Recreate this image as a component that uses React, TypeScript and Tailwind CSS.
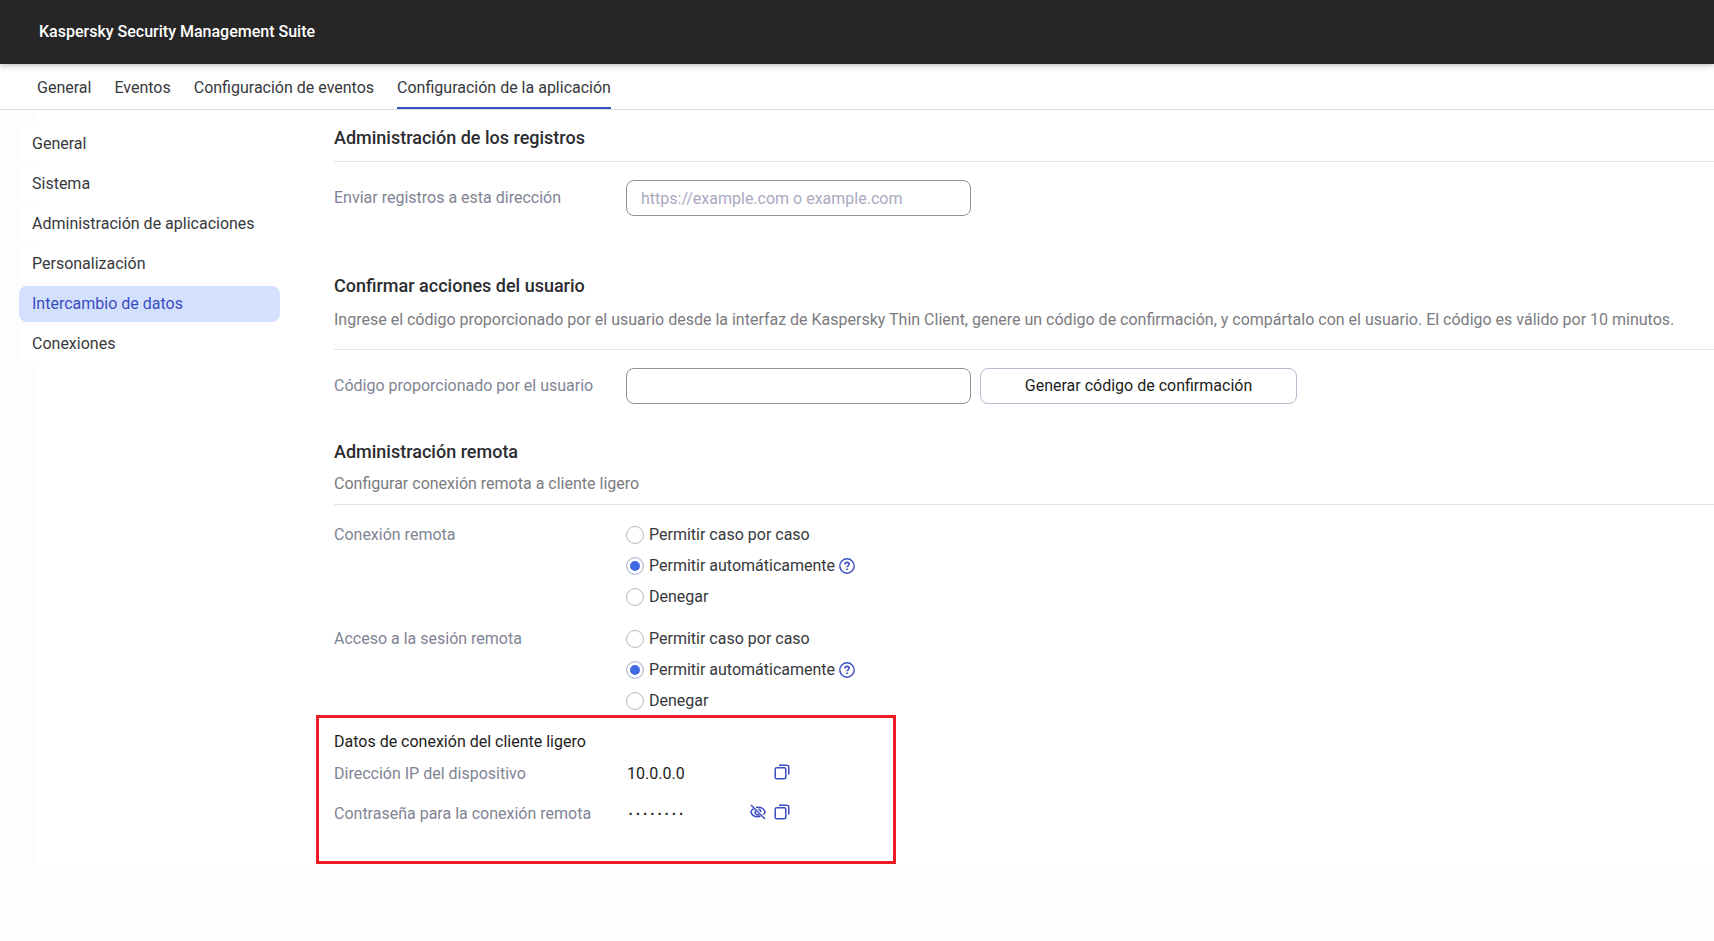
import { useState } from "react";

const TABS = ["General", "Eventos", "Configuración de eventos", "Configuración de la aplicación"];
const SECTIONS = [
  "General",
  "Sistema",
  "Administración de aplicaciones",
  "Personalización",
  "Intercambio de datos",
  "Conexiones",
];
const OPTIONS = ["Permitir caso por caso", "Permitir automáticamente", "Denegar"];

/* Inline icons */
const Help = () => (
  <svg width="16" height="16" viewBox="0 0 16 16" fill="none" stroke="currentColor" strokeWidth="1.4">
    <circle cx="8" cy="8" r="7.2" />
    <path d="M5.9 6.5c0-1.3.9-2.1 2.1-2.1s2.1.8 2.1 1.9c0 1.5-2 1.5-2 3" strokeWidth="1.6" />
    <path d="M7.2 10.4h1.7V12H7.2z" fill="currentColor" stroke="none" />
  </svg>
);
const Copy = () => (
  <svg width="16" height="16" viewBox="0 0 16 16" fill="none" stroke="currentColor" strokeWidth="1.5">
    <rect x="1.2" y="3.8" width="10.6" height="11" rx="1.6" />
    <path d="M5 1.2h7.6a2.2 2.2 0 0 1 2.2 2.2v7.2" />
  </svg>
);
const EyeOff = () => (
  <svg width="16" height="16" viewBox="0 0 16 16" fill="none" stroke="currentColor" strokeWidth="1.5">
    <path d="M1 1l14 14" />
    <path d="M3.6 4.6C2.2 5.5 1.2 6.8.9 8c.8 2.6 3.6 4.7 7.1 4.7.9 0 1.7-.1 2.5-.4" />
    <path d="M6 3.5c.6-.2 1.3-.2 2-.2 3.5 0 6.3 2.1 7.1 4.7-.3 1-.9 1.9-1.8 2.7" />
    <path d="M5.6 6.6a2.8 2.8 0 0 0 3.8 3.9M8.3 5.3a2.7 2.7 0 0 1 2.5 2.7" />
  </svg>
);

/** Group of radio buttons with its caption on the left */
function RadioRow({ name, label }: { name: string; label: string }) {
  const [value, setValue] = useState(OPTIONS[1]);
  return (
    <div role="radiogroup" aria-label={label} className="flex items-start">
      <span className="w-[292px] shrink-0 leading-6 text-[#7f8494]">{label}</span>
      <div className="flex flex-col gap-[7px]">
        {OPTIONS.map((o) => (
          <div key={o} className="flex items-center gap-1">
            <label className="flex items-center gap-[5px] leading-6">
              <input
                type="radio"
                name={name}
                checked={value === o}
                onChange={() => setValue(o)}
                className="size-[18px] appearance-none rounded-full border border-[#b5b8c6] bg-white bg-clip-padding checked:bg-[#4069e5] checked:shadow-[inset_0_0_0_3px_#fff]"
              />
              <span>{o}</span>
            </label>
            {o === OPTIONS[1] && (
              <button className="text-[#3b4cc0]" aria-label="Ayuda">
                <Help />
              </button>
            )}
          </div>
        ))}
      </div>
    </div>
  );
}

export default function App() {
  const [tab, setTab] = useState(TABS[3]);
  const [section, setSection] = useState(SECTIONS[4]);

  return (
    <div className="min-h-screen bg-[#fdfdfd] font-['Roboto',sans-serif] text-base text-[#37383c]">
      <header className="relative flex h-16 items-center bg-[#262626] px-[39px] shadow-[0_1px_6px_rgba(0,0,0,0.3)]">
        <h1 className="font-medium text-white">Kaspersky Security Management Suite</h1>
      </header>

      <nav className="flex h-[46px] gap-[23px] border-b border-[#dcdce0] bg-white px-[37px]">
        {TABS.map((t) => (
          <button
            key={t}
            onClick={() => setTab(t)}
            className={`border-b-2 pt-1 ${tab === t ? "border-[#3b4cc0]" : "border-transparent"}`}
          >
            {t}
          </button>
        ))}
      </nav>

      <div className="ml-[37px] flex bg-white">
        <aside className="-ml-[18px] flex w-[261px] shrink-0 flex-col gap-1 pt-4">
          {SECTIONS.map((s) => (
            <button
              key={s}
              onClick={() => setSection(s)}
              className={`h-9 rounded-lg px-[13px] text-left ${
                section === s ? "bg-[#d3e1ff] text-[#3b4cc0]" : "bg-white"
              }`}
            >
              {s}
            </button>
          ))}
        </aside>

        <main className="ml-[54px] min-w-0 flex-1 pt-4">
          {/* Registros */}
          <section>
            <h2 className="border-b border-[#e3e3e8] pb-[11px] text-lg leading-6 font-medium text-[#2b2c30]">
              Administración de los registros
            </h2>
            <div className="mt-[18px] flex items-center">
              <label htmlFor="log-url" className="w-[292px] shrink-0 text-[#7f8494]">
                Enviar registros a esta dirección
              </label>
              <input
                id="log-url"
                placeholder="https://example.com o example.com"
                className="h-9 w-[345px] rounded-lg border border-[#909096] bg-white px-3.5 outline-none placeholder:text-[#a9a9c0]"
              />
            </div>
          </section>

          {/* Confirmación */}
          <section className="mt-[58px]">
            <h2 className="text-lg leading-6 font-medium text-[#2b2c30]">Confirmar acciones del usuario</h2>
            <p className="mt-2.5 border-b border-[#e3e3ea] pb-[17px] leading-6 text-[#7b7b80]">
              Ingrese el código proporcionado por el usuario desde la interfaz de Kaspersky Thin Client, genere un
              código de confirmación, y compártalo con el usuario. El código es válido por 10 minutos.
            </p>
            <div className="mt-[18px] flex items-center">
              <label htmlFor="user-code" className="w-[292px] shrink-0 text-[#7f8494]">
                Código proporcionado por el usuario
              </label>
              <input
                id="user-code"
                className="h-9 w-[345px] rounded-lg border border-[#909096] bg-white px-3.5 outline-none"
              />
              <button className="ml-[9px] h-9 w-[317px] rounded-lg border border-[#b9b9cf] bg-white text-[#1d1d20]">
                Generar código de confirmación
              </button>
            </div>
          </section>

          {/* Administración remota */}
          <section className="mt-9">
            <h2 className="text-lg leading-6 font-medium text-[#2b2c30]">Administración remota</h2>
            <p className="mt-2 border-b border-[#e3e3ea] pb-2 leading-6 text-[#7b7b80]">
              Configurar conexión remota a cliente ligero
            </p>
            <div className="mt-[18px] flex flex-col gap-[18px]">
              <RadioRow name="connection" label="Conexión remota" />
              <RadioRow name="session" label="Acceso a la sesión remota" />
            </div>
          </section>

          {/* Datos de conexión */}
          <section className="mt-0.5 -ml-[18px] h-[149px] w-[580px] border-3 border-[#ed1c24] px-[15px] pt-3 text-[#1d1d20]">
            <h3 className="leading-6">Datos de conexión del cliente ligero</h3>
            <dl>
              <div className="mt-2 flex items-center leading-6">
                <dt className="w-[293px] text-[#7f8494]">Dirección IP del dispositivo</dt>
                <dd className="flex w-[163px] items-center justify-between">
                  10.0.0.0
                  <button className="pb-1 text-[#3b4cc0]" aria-label="Copiar dirección IP">
                    <Copy />
                  </button>
                </dd>
              </div>
              <div className="mt-4 flex items-center leading-6">
                <dt className="w-[293px] text-[#7f8494]">Contraseña para la conexión remota</dt>
                <dd className="flex w-[163px] items-center gap-2">
                  <span className="flex-1 font-['DejaVu_Sans_Mono',monospace] text-xs leading-6 font-bold">········</span>
                  <button className="pb-1 text-[#3b4cc0]" aria-label="Mostrar contraseña">
                    <EyeOff />
                  </button>
                  <button className="pb-1 text-[#3b4cc0]" aria-label="Copiar contraseña">
                    <Copy />
                  </button>
                </dd>
              </div>
            </dl>
          </section>
        </main>
      </div>
    </div>
  );
}
